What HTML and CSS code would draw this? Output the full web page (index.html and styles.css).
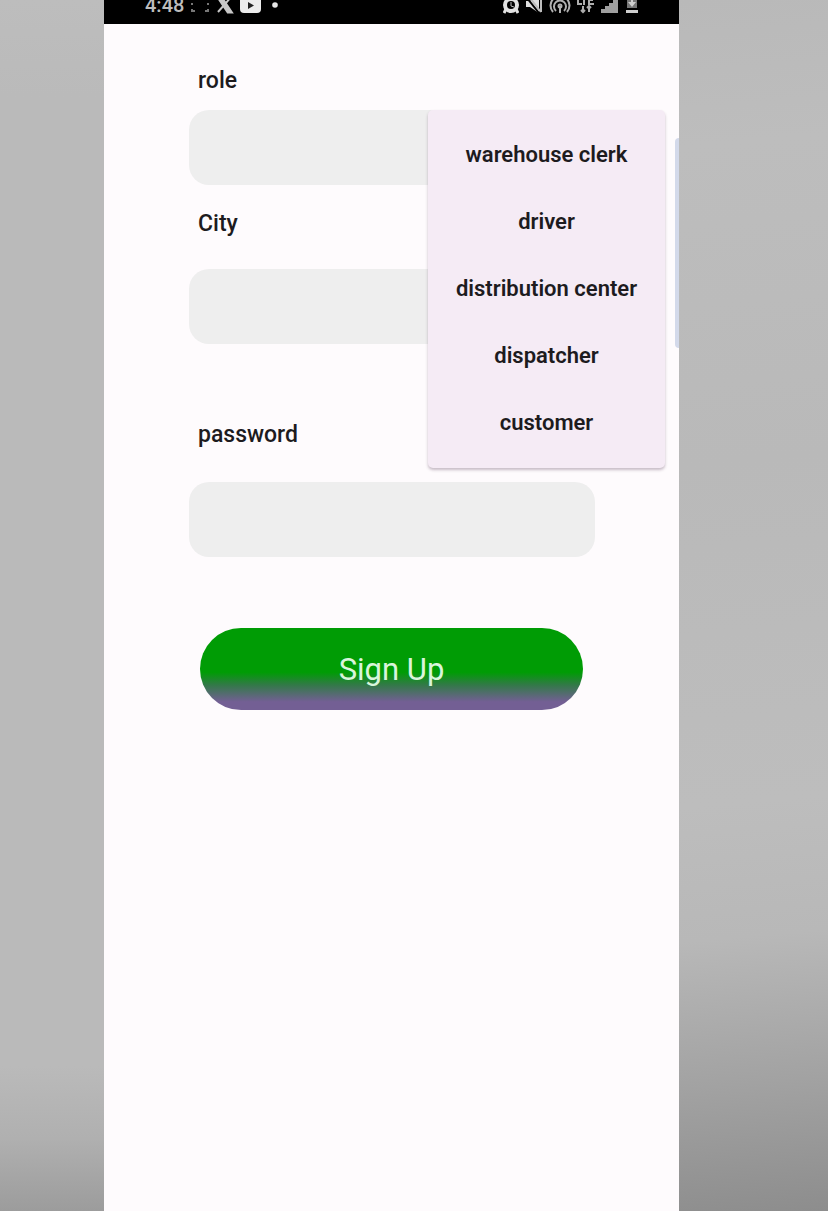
FILE: index.html
```html
<!DOCTYPE html>
<html lang="en">
<head>
<meta charset="utf-8">
<meta name="viewport" content="width=device-width, initial-scale=1">
<title>Sign Up</title>
<link rel="stylesheet" href="styles.css">
</head>
<body>
<div class="stage">
  <div class="side side-left"></div>
  <main class="phone">
    <header class="status">
      <div class="status-group">
        <span class="clock">4:48</span>
        <svg class="icon" width="20" height="20" viewBox="0 0 20 20" fill="none" stroke="#777" stroke-width="2"><path d="M1 5V1h4M15 1h4v4M2 15v2h3M18 15v2h-3M2 9v2M18 9v2"/></svg>
        <svg class="icon" width="18" height="20" viewBox="0 0 18 20" fill="none" stroke="#c8c8c8"><path d="M2 3h3l10 15h-3z" stroke-width="3"/><path d="M16 2L2 18" stroke-width="2"/></svg>
        <svg class="icon" width="22" height="20" viewBox="0 0 22 20"><rect y="2" width="21" height="17" rx="4" fill="#ececec"/><path d="M8 8l6 3.500-6 3.500z" fill="#222"/></svg>
        <svg class="icon dot-icon" width="6" height="20" viewBox="0 0 6 20"><circle cx="3" cy="11" r="2.800" fill="#e6e6e6"/></svg>
      </div>
      <div class="status-group status-right">
        <svg class="icon" width="16" height="20" viewBox="0 0 16 20"><circle cx="8" cy="11" r="6" fill="none" stroke="#e2e2e2" stroke-width="4"/><path d="M1 5l4-3M15 5l-4-3M3 15l-2 4M13 15l2 4" fill="none" stroke="#e2e2e2" stroke-width="3"/><path d="M8 8v4l3 1" fill="none" stroke="#bbb" stroke-width="1"/></svg>
        <svg class="icon" width="18" height="20" viewBox="0 0 18 20"><path d="M1 7h4l9-5v17l-9-6H1z" fill="#dedede"/><path d="M2 4l12 15" stroke="#000" stroke-width="2"/><path d="M4 3l12 15M16 4v14" fill="none" stroke="#bdbdbd" stroke-width="2"/></svg>
        <svg class="icon" width="22" height="20" viewBox="0 0 22 20" fill="none" stroke="#b0b0b0" stroke-width="2"><path d="M4 18a9.500 9.500 0 1 1 14 0M7 17a6 6 0 1 1 8 0M11 12v7"/><circle cx="11" cy="12" r="1.500"/></svg>
        <svg class="icon" width="18" height="20" viewBox="0 0 18 20" fill="none" stroke="#adadad" stroke-width="2"><path d="M1 1v9h4M4 2h6M7 2v9M17 2h-5v8h5M12 6h4M6 12v6M4 16l2 2 2-2M12 18v-6M10 14l2-2 2 2"/></svg>
        <svg class="icon" width="18" height="20" viewBox="0 0 18 20" fill="#a0a0a0"><path d="M0 15h4v-3h4V9h4V5h5v14H0z"/></svg>
        <svg class="icon" width="14" height="20" viewBox="0 0 14 20" fill="#cfcfcf"><path d="M2 2h10v12H2z" fill="#777"/><path d="M6 3h2v5h3l-4 5-4-5h3zM1 16h12v3H1z"/></svg>
      </div>
    </header>

    <form class="form">
      <label class="label" for="role">role</label>
      <div class="dropdown">
        <select class="field" id="role"><option value=""></option></select>
        <div class="menu">
          <button class="menu-item" type="button">warehouse clerk</button>
          <button class="menu-item" type="button">driver</button>
          <button class="menu-item" type="button">distribution center</button>
          <button class="menu-item" type="button">dispatcher</button>
          <button class="menu-item" type="button">customer</button>
        </div>
      </div>

      <label class="label label-city" for="city">City</label>
      <input class="field" id="city" type="text">

      <label class="label label-password" for="password">password</label>
      <input class="field" id="password" type="password">

      <button class="submit" type="button">Sign Up</button>
    </form>
    <div class="edge-handle"></div>
  </main>
  <div class="side side-right"></div>
</div>
</body>
</html>
```
FILE: styles.css
```css
* {
  box-sizing: border-box;
}

body {
  margin: 0;
  font-family: Roboto, sans-serif;
  color: #1d1b1e;
}

.stage {
  display: grid;
  grid-template-columns: 104fr 575fr 149fr;
  min-height: 100vh;
  background: #bbb;
}

.side-left {
  background: linear-gradient(#bdbdbd, #bababa 8%, #bababa 88%, #b0b0b0 94%, #9c9c9c);
}

.side-right {
  background: linear-gradient(175deg, #b9b9b9, #bdbdbd 12%, #b9b9b9 38%, #bdbdbd 66%, #b8b8b8 77%, #a2a2a2 89%, #8d8d8d);
}

.phone {
  position: relative;
  background: #fefbfd;
}

.status {
  display: flex;
  justify-content: space-between;
  align-items: flex-end;
  height: 24px;
  padding: 0 40px 10px 41px;
  overflow: hidden;
  background: #000;
}

.status-group {
  display: flex;
  align-items: flex-end;
  gap: 6px;
}

.clock {
  font-size: 20px;
  line-height: 18px;
  font-weight: 500;
  color: #bdbdbd;
}

.icon {
  display: block;
  flex: none;
}

.dot-icon {
  margin-left: 4px;
}

.form {
  display: flex;
  flex-direction: column;
  padding: 42px 84px 40px 85px;
}

.label {
  align-self: flex-start;
  margin-left: 9px;
  margin-bottom: 32px;
  font-size: 23px;
  line-height: 30px;
  font-weight: 500;
}

.label:first-child {
  margin-bottom: 14px;
}

.label-city {
  margin-top: 24px;
  margin-bottom: 30px;
}

.label-password {
  margin-top: 76px;
}

.field {
  display: block;
  width: 100%;
  height: 75px;
  padding: 0 20px;
  border: 0;
  border-radius: 20px;
  appearance: none;
  background: #eee;
  font: inherit;
  font-size: 22px;
  color: inherit;
}

.dropdown {
  position: relative;
}

.menu {
  position: absolute;
  top: 0;
  right: -70px;
  z-index: 1;
  display: flex;
  flex-direction: column;
  width: 237px;
  padding: 11px 0 12px;
  border-radius: 5px;
  background: #f5ebf5;
  box-shadow: 0 2px 3px rgba(70, 40, 70, 0.3);
}

.menu-item {
  height: 67px;
  padding: 0;
  border: 0;
  background: none;
  font: inherit;
  font-size: 22px;
  font-weight: 600;
  text-align: center;
  color: #1d1b1e;
}

.submit {
  height: 82px;
  margin: 71px 12px 0 11px;
  border: 0;
  border-radius: 41px;
  background: linear-gradient(#009c05 54%, #34784a 70%, #735f94 90%);
  font: inherit;
  font-size: 31px;
  color: #d9f5dc;
}

.edge-handle {
  position: absolute;
  top: 138px;
  right: 0;
  width: 4px;
  height: 210px;
  border-radius: 4px 0 0 4px;
  background: #d3d9ea;
}
```
